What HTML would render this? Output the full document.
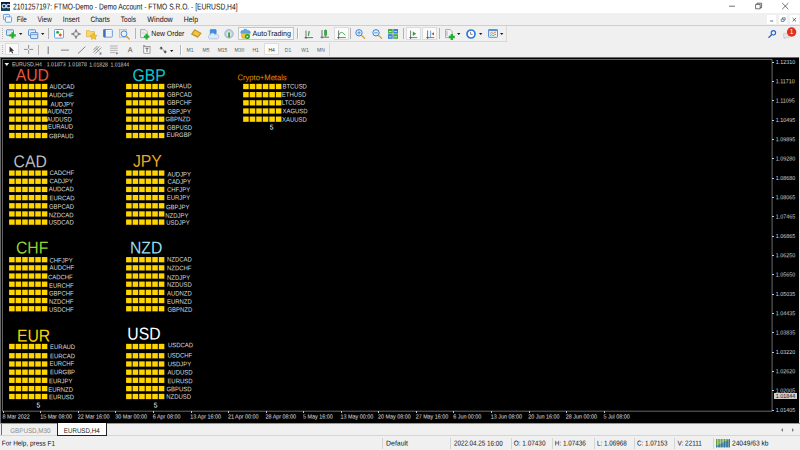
<!DOCTYPE html>
<html lang="en"><head>
<meta charset="utf-8">
<title>2101257197: FTMO-Demo - Demo Account - FTMO S.R.O. - [EURUSD,H4]</title>
<style>
html,body{margin:0;padding:0;}
body{width:800px;height:450px;overflow:hidden;position:relative;background:#f0f0f0;font-family:"Liberation Sans",sans-serif;color:#000;}
.abs{position:absolute;}
.t{position:absolute;white-space:nowrap;}
#titlebar{position:absolute;left:0;top:0;width:800px;height:13px;background:#fff;}
#menubar{position:absolute;left:0;top:13px;width:800px;height:12px;background:#f0f0f0;}
#tb1{position:absolute;left:0;top:25px;width:800px;height:17px;background:#f0f0f0;}
#tb2{position:absolute;left:0;top:42px;width:800px;height:15px;background:#f0f0f0;}
#chart{position:absolute;left:0;top:57px;width:800px;height:366.4px;background:#000;}
#chartinner{position:absolute;left:0;top:0;width:800px;height:450px;}
.row{position:absolute;height:5px;width:40px;}
.row i{position:absolute;top:0;width:5px;height:5px;background:#ffd400;}
.row i:nth-child(1){left:0}
.row i:nth-child(2){left:6.35px}
.row i:nth-child(3){left:12.7px}
.row i:nth-child(4){left:19.05px}
.row i:nth-child(5){left:25.4px}
.row i:nth-child(6){left:31.75px}
.m{position:absolute;top:15px;font-size:7px;line-height:9px;color:#111;white-space:nowrap;}
.tf{position:absolute;top:46.8px;font-size:5px;line-height:7px;color:#5a5a5a;white-space:nowrap;transform:translateX(-50%);}
.sep{position:absolute;width:1px;background:#b4b4b4;}
.dd{position:absolute;width:0;height:0;border-left:1.8px solid transparent;border-right:1.8px solid transparent;border-top:2.1px solid #222;}
.pressed{position:absolute;background:#fbfbfb;border:0.5px solid #dcdcdc;box-sizing:border-box;}
.px{position:absolute;font-size:5.35px;line-height:6px;color:#d8d8d8;left:775.8px;white-space:nowrap;}
.tick{position:absolute;left:772.3px;width:1.3px;height:0.6px;background:#c8c8c8;}
.tx{position:absolute;top:413.5px;font-size:5.4px;line-height:6px;color:#e2e2e2;white-space:nowrap;}
.ttick{position:absolute;top:411px;width:1px;height:2px;background:#c8c8c8;}
.sb{position:absolute;top:439.6px;font-size:6.4px;line-height:8px;color:#111;white-space:nowrap;}
.sbsep{position:absolute;top:438px;width:1px;height:11px;background:#d4d4d4;}
svg{position:absolute;overflow:visible;}
</style>
</head>
<body>
<!-- title bar -->
<div id="titlebar">
  <div class="abs" style="left:0.9px;top:1.9px;width:9.3px;height:9px;background:linear-gradient(#08162c 0%,#0e2440 55%,#1d4f6e 100%);"></div>
  <div class="t" style="left: 0px; top: 0px; font-size: 6.4px; line-height: 6px; color: rgb(255, 255, 255); font-weight: bold; letter-spacing: -0.7px; transform-origin: 0px 5px; transform: translate(1.5px, 3.3px) rotate(0.05deg);">OC</div>
  <div class="t" id="ttl" style="left: 0px; top: 0px; font-size: 7.4px; line-height: 9px; color: rgb(17, 17, 17); transform-origin: 0px 7px; transform: translate(13.1px, 2.39px) scale(0.9046, 1.15) rotate(0.05deg);">2101257197: FTMO-Demo - Demo Account - FTMO S.R.O. - [EURUSD,H4]</div>
  <svg style="left:726px;top:0" width="74" height="13" viewBox="0 0 74 13">
    <path d="M3 6.2h6" stroke="#333" stroke-width="0.7" fill="none"></path>
    <path d="M29.6 4.4h4.6v4.4h-4.6z M31 4.4v-1.2h4.6v4.4h-1.4" stroke="#333" stroke-width="0.7" fill="none"></path>
    <path d="M56.2 3l6.2 6.2 M62.4 3l-6.2 6.2" stroke="#333" stroke-width="0.7" fill="none"></path>
  </svg>
</div>
<!-- menu bar -->
<div id="menubar"></div>
<svg style="left:2.6px;top:14.4px" width="9.4" height="9.4" viewBox="0 0 10 10">
  <rect x="0.5" y="0.5" width="6.5" height="5.5" rx="0.8" fill="#e8f1fb" stroke="#5b8fd0" stroke-width="0.9"></rect>
  <rect x="2.6" y="3" width="6.5" height="5.8" rx="0.8" fill="#f4f8fd" stroke="#5b8fd0" stroke-width="0.9"></rect>
</svg>
<div class="m" id="m0" style="left: 0px; top: 0px; transform-origin: 0px 7px; transform: translate(16.65px, 15px) scale(0.9042, 1.12) rotate(0.05deg);">File</div>
<div class="m" id="m1" style="left: 0px; top: 0px; transform-origin: 0px 7px; transform: translate(37.5px, 15px) scale(0.947, 1.12) rotate(0.05deg);">View</div>
<div class="m" id="m2" style="left: 0px; top: 0px; transform-origin: 0px 7px; transform: translate(62.8px, 15px) scale(0.9649, 1.12) rotate(0.05deg);">Insert</div>
<div class="m" id="m3" style="left: 0px; top: 0px; transform-origin: 0px 7px; transform: translate(90.4px, 15px) scale(0.9455, 1.12) rotate(0.05deg);">Charts</div>
<div class="m" id="m4" style="left: 0px; top: 0px; transform-origin: 0px 7px; transform: translate(120.8px, 15px) scale(0.9239, 1.12) rotate(0.05deg);">Tools</div>
<div class="m" id="m5" style="left: 0px; top: 0px; transform-origin: 0px 7px; transform: translate(147.3px, 15px) scale(1.0238, 1.12) rotate(0.05deg);">Window</div>
<div class="m" id="m6" style="left: 0px; top: 0px; transform-origin: 0px 7px; transform: translate(183.8px, 15px) scale(0.9857, 1.12) rotate(0.05deg);">Help</div>
<!-- MDI controls -->
<div class="abs" style="left:767.3px;top:15px;width:8.7px;height:9px;background:#fff;"></div>
<div class="abs" style="left:778.7px;top:15px;width:8.7px;height:9px;background:#fff;"></div>
<div class="abs" style="left:790px;top:15px;width:8.7px;height:9px;background:#fff;"></div>
<svg style="left:767px;top:15px" width="33" height="9" viewBox="0 0 33 9">
  <path d="M3.2 6h3" stroke="#3b5c8c" stroke-width="0.9" fill="none"></path>
  <path d="M14.2 4.2h2.8v2.2h-2.8z M15.4 4v-1.2h2.8v2.2h-1" stroke="#3b5c8c" stroke-width="0.7" fill="none"></path>
  <path d="M25.6 3l3.4 3.4 M29 3l-3.4 3.4" stroke="#3b5c8c" stroke-width="0.9" fill="none"></path>
</svg>
<div class="abs" style="left:0;top:24.6px;width:800px;height:0.8px;background:#cfcfcf;"></div>
<!-- toolbar 1 -->
<div class="abs" style="left:0;top:41px;width:507px;height:0.8px;background:#d9d9d9;"></div>
<div class="abs" style="left:506.3px;top:26px;width:0.8px;height:15.5px;background:#d9d9d9;"></div>
<div class="abs" style="left:2px;top:28px;width:1px;height:11px;background:repeating-linear-gradient(#b4b4b4 0 1px,#f0f0f0 1px 2px);"></div>
<!-- new chart -->
<svg style="left:6px;top:28.5px" width="11" height="11" viewBox="0 0 11 11">
  <rect x="0.5" y="0.8" width="7" height="5.6" rx="0.6" fill="#dbe9f8" stroke="#4f86c6" stroke-width="0.9"></rect>
  <path d="M6.6 3.2v6.4M3.4 6.4h6.4" stroke="#1fb02c" stroke-width="2.3" fill="none"></path>
</svg>
<svg style="left:19.4px;top:33.3px" width="4" height="3" viewBox="0 0 4 3"><path d="M0 0h3.4l-1.7 2z" fill="#1e1e1e"></path></svg>
<!-- profiles -->
<svg style="left:28px;top:28.5px" width="11" height="11" viewBox="0 0 11 11">
  <rect x="0.5" y="0.8" width="7" height="5.8" rx="0.6" fill="#e6effa" stroke="#4f86c6" stroke-width="0.9"></rect>
  <rect x="2.6" y="3.6" width="7.2" height="6" rx="0.6" fill="#dbe7f6" stroke="#4f86c6" stroke-width="0.9"></rect>
  <path d="M3.2 5.6h6" stroke="#4f86c6" stroke-width="0.7"></path>
</svg>
<svg style="left:41.2px;top:33.3px" width="4" height="3" viewBox="0 0 4 3"><path d="M0 0h3.4l-1.7 2z" fill="#1e1e1e"></path></svg>
<div class="sep" style="left:48.3px;top:28px;height:11px"></div>
<!-- market watch -->
<svg style="left:54px;top:29px" width="10" height="10" viewBox="0 0 10 10">
  <rect x="0.5" y="0.5" width="9" height="8.6" rx="0.8" fill="#fff" stroke="#66a4e4" stroke-width="1"></rect>
  <circle cx="3.6" cy="3.3" r="1.5" fill="#2fae3a"></circle>
  <path d="M6.3 4.2l1.8 1.8-1.8 1.8-1.8-1.8z" fill="#e8552a"></path>
</svg>
<!-- data window -->
<svg style="left:70.5px;top:29px" width="10" height="10" viewBox="0 0 10 10">
  <path d="M5 1.6l3.4 3.4-3.4 3.4-3.4-3.4z" fill="none" stroke="#555" stroke-width="0.7"></path>
  <path d="M5 0.2v3.4M5 6.4v3.4M0.2 5h3.4M6.4 5h3.4" stroke="#444" stroke-width="0.8"></path>
</svg>
<!-- navigator -->
<svg style="left:86px;top:28.5px" width="12" height="11" viewBox="0 0 12 11">
  <path d="M0.5 1.6h3l0.8 1h4.2v5.2h-8z" fill="#f7d96a" stroke="#d4a72c" stroke-width="0.6"></path>
  <path d="M7.6 4l1.1 2.2 2.4 0.3-1.8 1.6 0.5 2.3-2.2-1.2-2.2 1.2 0.5-2.3-1.8-1.6 2.4-0.3z" fill="#f4c430" stroke="#c9971a" stroke-width="0.5"></path>
</svg>
<!-- terminal -->
<svg style="left:103px;top:29.4px" width="10" height="9" viewBox="0 0 10 9">
  <rect x="0.5" y="0.5" width="8.8" height="7.6" rx="0.7" fill="#fdfdff" stroke="#5590dc" stroke-width="0.9"></rect>
  <rect x="0.5" y="0.5" width="2.2" height="7.6" fill="#3a70c0"></rect>
  <path d="M3.6 2.6h4.6M3.6 4.3h4.6M3.6 6h4.6" stroke="#c5d6ee" stroke-width="0.5"></path>
</svg>
<!-- strategy tester -->
<svg style="left:119.4px;top:28.8px" width="11" height="11" viewBox="0 0 11 11">
  <rect x="0.6" y="0.6" width="7" height="7.6" fill="#e9e9e9" stroke="#a9a9a9" stroke-width="0.6"></rect>
  <circle cx="5" cy="4.8" r="2.9" fill="#eaf3fd" stroke="#4f8fd8" stroke-width="1"></circle>
  <path d="M7.2 7l3 3" stroke="#d89a2c" stroke-width="1.3" stroke-linecap="round"></path>
</svg>
<div class="sep" style="left:134.5px;top:28px;height:11px"></div>
<!-- new order -->
<svg style="left:140px;top:28.8px" width="10" height="11" viewBox="0 0 10 11">
  <path d="M0.6 0.6h4.6l2 2v6h-6.6z" fill="#f4f4f4" stroke="#8c8c8c" stroke-width="0.7"></path>
  <path d="M1.8 3.2h3M1.8 4.8h3.6" stroke="#b5b5b5" stroke-width="0.5"></path>
  <path d="M6.6 4.8v5.6M3.8 7.6h5.6" stroke="#1fb02c" stroke-width="2.2" fill="none"></path>
</svg>
<div class="t" id="no" style="left: 0px; top: 0px; font-size: 6.9px; line-height: 7px; color: rgb(17, 17, 17); transform-origin: 0px 6px; transform: translate(151.2px, 30.09px) scale(0.9962, 1.1) rotate(0.05deg);">New Order</div>
<!-- metaeditor -->
<svg style="left:191px;top:29.4px" width="11" height="9" viewBox="0 0 11 9">
  <path d="M3.6 0.6l6.6 3.6-3.4 4.2-6.4-3.2z" fill="#d9a21c" stroke="#a9780c" stroke-width="0.6"></path>
  <path d="M4 1.8l4.8 2.6-2.2 2.6-4.6-2.3z" fill="#f0c846"></path>
</svg>
<!-- person / cloud -->
<svg style="left:207.5px;top:28.8px" width="11" height="11" viewBox="0 0 11 11">
  <rect x="2.2" y="0.5" width="6" height="5.8" rx="0.8" fill="#3c8fe6" stroke="#2b72c4" stroke-width="0.5"></rect>
  <path d="M1.6 9.8a2 2 0 0 1 0.4-3.8 2.6 2.6 0 0 1 4.8-0.6 2.2 2.2 0 0 1 2.8 4.4z" fill="#dfeaf6" stroke="#8fb0d8" stroke-width="0.6"></path>
</svg>
<!-- signals -->
<svg style="left:223.8px;top:29.2px" width="10" height="10" viewBox="0 0 10 10">
  <circle cx="5" cy="4.8" r="4.4" fill="#b9c9dd" stroke="#8aa3c2" stroke-width="0.5"></circle>
  <circle cx="5" cy="4.8" r="2.6" fill="#dfe8f2"></circle>
  <rect x="4.2" y="3.4" width="1.8" height="5" fill="#2ea63a"></rect>
</svg>
<!-- autotrading -->
<div class="abs" style="left:238px;top:27px;width:56px;height:12.6px;background:#f7f7f7;border:0.7px solid #c6c6c6;box-sizing:border-box;"></div>
<svg style="left:240px;top:28.8px" width="11" height="11" viewBox="0 0 11 11">
  <path d="M1 4.2l1.2 5h6.6l1.2-5z" fill="#f0c53a" stroke="#c3961c" stroke-width="0.5"></path>
  <path d="M0.8 3.8a2 2 0 0 1 2.2-2.2 2.6 2.6 0 0 1 4.6 0 2 2 0 0 1 2.6 2.4z" fill="#5ea7e6" stroke="#3b80c6" stroke-width="0.5"></path>
  <circle cx="7.4" cy="7.6" r="2.5" fill="#25a52e"></circle>
  <path d="M6.6 6.4l2 1.2-2 1.2z" fill="#fff"></path>
</svg>
<div class="t" id="at" style="left: 0px; top: 0px; font-size: 6.9px; line-height: 7px; color: rgb(17, 17, 17); transform-origin: 0px 6px; transform: translate(252.5px, 30.09px) scale(1.0323, 1.1) rotate(0.05deg);">AutoTrading</div>
<div class="sep" style="left:297px;top:28px;height:11px"></div>
<div class="sep" style="left:298.2px;top:28px;height:11px;background:#fff"></div>
<!-- bar chart -->
<svg style="left:303.5px;top:29.5px" width="10" height="10" viewBox="0 0 10 10">
  <path d="M2 0.5v8.5M0.5 7.6h8.5" stroke="#222" stroke-width="0.6" fill="none"></path>
  <path d="M5.2 1.2l-0.8 4.6" stroke="#2da03a" stroke-width="1.2"></path>
</svg>
<!-- candles -->
<svg style="left:320.3px;top:29px" width="10" height="10" viewBox="0 0 10 10">
  <path d="M2 1v8.5M0.5 8.2h8.5" stroke="#222" stroke-width="0.6" fill="none"></path>
  <path d="M5.6 0.3v8" stroke="#2b7a33" stroke-width="0.6"></path>
  <rect x="4.4" y="1.6" width="2.4" height="4.6" fill="#2fb23c" stroke="#1f8a2c" stroke-width="0.4"></rect>
</svg>
<!-- line chart pressed -->
<div class="pressed" style="left:333.5px;top:27px;width:15.3px;height:12.6px;"></div>
<svg style="left:336.6px;top:29.5px" width="10" height="10" viewBox="0 0 10 10">
  <path d="M1.6 0.5v8.5M0.3 7.6h8.5" stroke="#222" stroke-width="0.6" fill="none"></path>
  <path d="M1.8 5.2c1.6-3.6 3.6-3.8 6.2 0" stroke="#2da03a" stroke-width="0.9" fill="none"></path>
</svg>
<div class="sep" style="left:350.2px;top:28px;height:11px"></div>
<!-- zoom in -->
<svg style="left:355px;top:29.2px" width="11" height="10" viewBox="0 0 11 10">
  <circle cx="4" cy="3.8" r="3.2" fill="#dcecfb" stroke="#3d85d6" stroke-width="1"></circle>
  <path d="M2.4 3.8h3.2M4 2.2v3.2" stroke="#3d85d6" stroke-width="0.8"></path>
  <path d="M6.6 6.4l3 2.8" stroke="#d9a432" stroke-width="1.4" stroke-linecap="round"></path>
</svg>
<!-- zoom out -->
<svg style="left:371.6px;top:29.2px" width="11" height="10" viewBox="0 0 11 10">
  <circle cx="4" cy="3.8" r="3.2" fill="#dcecfb" stroke="#3d85d6" stroke-width="1"></circle>
  <path d="M2.4 3.8h3.2" stroke="#3d85d6" stroke-width="0.8"></path>
  <path d="M6.6 6.4l3 2.8" stroke="#d9a432" stroke-width="1.4" stroke-linecap="round"></path>
</svg>
<!-- tile -->
<svg style="left:388px;top:29px" width="10" height="10" viewBox="0 0 10 10">
  <rect x="0" y="0" width="4.7" height="4.6" fill="#3fae3f"></rect>
  <rect x="5.3" y="0" width="4.7" height="4.6" fill="#3a7fd6"></rect>
  <rect x="0" y="5.2" width="4.7" height="4.6" fill="#3a7fd6"></rect>
  <rect x="5.3" y="5.2" width="4.7" height="4.6" fill="#3fae3f"></rect>
  <path d="M1 2.6h2.6M6.3 2.6h2.6M1 7.8h2.6M6.3 7.8h2.6" stroke="#e9f2fb" stroke-width="0.9"></path>
</svg>
<div class="sep" style="left:402.8px;top:28px;height:11px"></div>
<!-- autoscroll pressed -->
<div class="pressed" style="left:406px;top:27px;width:14.6px;height:12.6px;"></div>
<svg style="left:409.4px;top:29.5px" width="10" height="10" viewBox="0 0 10 10">
  <path d="M1.6 0.5v8.5M0.3 7.6h8" stroke="#222" stroke-width="0.6" fill="none"></path>
  <path d="M3.8 1.6l3.4 2.2-3.4 2.2z" fill="#2da03a"></path>
</svg>
<!-- chart shift pressed -->
<div class="pressed" style="left:422px;top:27px;width:15px;height:12.6px;"></div>
<svg style="left:425.6px;top:29.5px" width="10" height="10" viewBox="0 0 10 10">
  <path d="M1.6 0.5v8.5M0.3 7.6h8" stroke="#222" stroke-width="0.6" fill="none"></path>
  <path d="M4.6 0.6v6.4" stroke="#3d85d6" stroke-width="0.7"></path>
  <path d="M8 2.2l-2.6 1.6 2.6 1.6z" fill="#d9482a"></path>
</svg>
<div class="sep" style="left:439.4px;top:28px;height:11px"></div>
<!-- indicators -->
<svg style="left:445px;top:28.8px" width="11" height="12" viewBox="0 0 11 12">
  <path d="M0.6 0.6h4.6l2 2v6h-6.6z" fill="#f4f4f4" stroke="#8c8c8c" stroke-width="0.7"></path>
  <path d="M2 2v5" stroke="#777" stroke-width="0.5"></path>
  <path d="M6.8 5v6M3.8 8h6" stroke="#1fb02c" stroke-width="2.3" fill="none"></path>
</svg>
<svg style="left:457.2px;top:33.3px" width="4" height="3" viewBox="0 0 4 3"><path d="M0 0h3.4l-1.7 2z" fill="#1e1e1e"></path></svg>
<!-- clock -->
<svg style="left:466px;top:28.7px" width="10" height="10" viewBox="0 0 10 10">
  <circle cx="5" cy="5" r="4" fill="#fff" stroke="#2f7ad6" stroke-width="1.7"></circle>
  <path d="M4.6 2.8v2.6h2" stroke="#555" stroke-width="0.7" fill="none"></path>
</svg>
<svg style="left:478.6px;top:33.3px" width="4" height="3" viewBox="0 0 4 3"><path d="M0 0h3.4l-1.7 2z" fill="#1e1e1e"></path></svg>
<!-- templates -->
<svg style="left:487.7px;top:29.4px" width="10" height="9" viewBox="0 0 10 9">
  <rect x="0.5" y="0.5" width="9" height="7.8" rx="0.6" fill="#eef4fb" stroke="#5a94d8" stroke-width="1"></rect>
  <rect x="0.5" y="0.5" width="9" height="1.6" fill="#5a94d8"></rect>
  <path d="M1.6 4.6l2-1 1.6 0.8 2.8-1.4" stroke="#e0663a" stroke-width="0.8" fill="none"></path>
  <path d="M1.6 6.8l2-1 1.6 0.8 2.8-1.4" stroke="#3fae3f" stroke-width="0.8" fill="none"></path>
</svg>
<svg style="left:500.2px;top:33.3px" width="4" height="3" viewBox="0 0 4 3"><path d="M0 0h3.4l-1.7 2z" fill="#1e1e1e"></path></svg>
<!-- search + notification -->
<svg style="left:768px;top:30px" width="9" height="8" viewBox="0 0 9 8">
  <circle cx="5.4" cy="2.8" r="2.2" fill="#e8f0fc" stroke="#2f62c8" stroke-width="1.1"></circle>
  <path d="M3.8 4.6l-3 2.8" stroke="#2f62c8" stroke-width="1.3" stroke-linecap="round"></path>
</svg>
<svg style="left:783px;top:27px" width="14" height="13" viewBox="0 0 14 13">
  <path d="M0.6 6.4h5.6v4h-3l-1.6 1.6v-1.6h-1z" fill="#e4e4e4" stroke="#bdbdbd" stroke-width="0.5"></path>
  <circle cx="8.6" cy="5" r="4.7" fill="#e0301e"></circle>
  <text x="8.6" y="7.4" font-size="6.6" font-family="Liberation Sans, sans-serif" fill="#fff" text-anchor="middle">1</text>
</svg>
<!-- toolbar 2 -->
<div class="abs" style="left:2px;top:45px;width:1px;height:10px;background:repeating-linear-gradient(#b4b4b4 0 1px,#f0f0f0 1px 2px);"></div>
<div class="abs" style="left:329.4px;top:43px;width:0.8px;height:13px;background:#d9d9d9;"></div>
<div class="pressed" style="left:5px;top:43.2px;width:14px;height:12px;"></div>
<svg style="left:8.6px;top:46px" width="6" height="8" viewBox="0 0 6 8">
  <path d="M0.6 0.4v6.2l1.5-1.4 1.1 2.4 1-0.5-1.1-2.3h2z" fill="#333"></path>
</svg>
<svg style="left:24px;top:45.4px" width="10" height="9" viewBox="0 0 10 9">
  <path d="M4.6 0v3.6M4.6 5.2v3.6M0 4.4h3.8M5.4 4.4h3.8" stroke="#666" stroke-width="0.7"></path>
</svg>
<div class="sep" style="left:38px;top:45px;height:10px"></div>
<svg style="left:44px;top:45px" width="30" height="10" viewBox="0 0 30 10"><path d="M4.2 1.5v7.5" stroke="#555" stroke-width="0.8"></path><path d="M17 5.1h8" stroke="#666" stroke-width="0.8"></path></svg>

<svg style="left:77px;top:46px" width="10" height="9" viewBox="0 0 10 9">
  <path d="M1 7.6l7.4-7" stroke="#555" stroke-width="0.7"></path>
</svg>
<svg style="left:93px;top:45.4px" width="10" height="10" viewBox="0 0 10 10">
  <path d="M0.4 7.4l6-6M2.2 8.6l6-6M0.4 5l4-4" stroke="#555" stroke-width="0.6"></path>
  <path d="M3 3.4l3 3" stroke="#555" stroke-width="0.5"></path>
  <text x="6.4" y="9.6" font-size="3.4" font-family="Liberation Sans, sans-serif" fill="#333">E</text>
</svg>
<svg style="left:110px;top:45px" width="10" height="10" viewBox="0 0 10 10">
  <path d="M0 1h7.6M0 3.2h7.6M0 5.4h7.6M0 7.6h5.4" stroke="#8a8a8a" stroke-width="0.6"></path>
  <text x="6" y="9.6" font-size="3.4" font-family="Liberation Sans, sans-serif" fill="#333">F</text>
</svg>
<div class="t" style="left: 0px; top: 0px; font-size: 7.2px; line-height: 8px; color: rgb(85, 85, 85); transform-origin: 0px 6px; transform: translate(127.8px, 46.3px) rotate(0.05deg);">A</div>
<svg style="left:143px;top:45.2px" width="8" height="9" viewBox="0 0 8 9">
  <rect x="0.8" y="1.6" width="6.2" height="6.6" fill="#fbfbfb" stroke="#666" stroke-width="0.6"></rect>
  <path d="M0 0.6h2.2" stroke="#666" stroke-width="0.6"></path>
  <path d="M2.4 3.2h3.2M4 3.2v3.8" stroke="#444" stroke-width="0.8"></path>
</svg>
<svg style="left:159px;top:46px" width="9" height="8" viewBox="0 0 9 8">
  <path d="M2.2 0.4l1.8 2h-1.2v1h-1.2v-1h-1.2z" fill="#444"></path>
  <path d="M6.2 7.6l-1.8-2h1.2v-1h1.2v1h1.2z" fill="#444"></path>
  <path d="M3.6 3.4l2 1.6" stroke="#444" stroke-width="0.6"></path>
</svg>
<svg style="left:170.2px;top:49.6px" width="4" height="3" viewBox="0 0 4 3"><path d="M0 0h3.4l-1.7 2z" fill="#1e1e1e"></path></svg>
<div class="sep" style="left:179.8px;top:45px;height:10px"></div>
<div class="sep" style="left:181px;top:45px;height:10px;background:#fff"></div>
<div class="pressed" style="left:264.4px;top:43.2px;width:15px;height:12px;"></div>
<div class="tf" style="left: 0px; top: 0px; transform-origin: 0px 5px; transform: translate(186.52px, 46.8px) scale(1, 1.1) rotate(0.05deg);">M1</div>
<div class="tf" style="left: 0px; top: 0px; transform-origin: 0px 5px; transform: translate(202.52px, 46.8px) scale(1, 1.1) rotate(0.05deg);">M5</div>
<div class="tf" style="left: 0px; top: 0px; transform-origin: 0px 5px; transform: translate(217.63px, 46.8px) scale(1, 1.1) rotate(0.05deg);">M15</div>
<div class="tf" style="left: 0px; top: 0px; transform-origin: 0px 5px; transform: translate(234.52px, 46.8px) scale(1, 1.1) rotate(0.05deg);">M30</div>
<div class="tf" style="left: 0px; top: 0px; transform-origin: 0px 5px; transform: translate(252.39px, 46.8px) scale(1, 1.1) rotate(0.05deg);">H1</div>
<div class="tf" style="left: 0px; color: rgb(51, 51, 51); top: 0px; transform-origin: 0px 5px; transform: translate(268.39px, 46.8px) scale(1, 1.1) rotate(0.05deg);">H4</div>
<div class="tf" style="left: 0px; top: 0px; transform-origin: 0px 5px; transform: translate(284.8px, 46.8px) scale(1, 1.1) rotate(0.05deg);">D1</div>
<div class="tf" style="left: 0px; top: 0px; transform-origin: 0px 5px; transform: translate(301.25px, 46.8px) scale(1, 1.1) rotate(0.05deg);">W1</div>
<div class="tf" style="left: 0px; top: 0px; transform-origin: 0px 5px; transform: translate(317.11px, 46.8px) scale(1, 1.1) rotate(0.05deg);">MN</div>

<!-- chart -->
<div id="chart"></div>
<div id="chartinner">
<div class="abs" style="left:0;top:56.8px;width:800px;height:1px;background:#6a6a6a;"></div>
<div class="abs" style="left:0;top:57.5px;width:1px;height:366px;background:#6a6a6a;"></div>
<div class="abs" style="left:798.8px;top:57.3px;width:1.2px;height:366.3px;background:#e6e6e6;"></div>
<svg style="left:0;top:0" width="800" height="450" viewBox="0 0 800 450"><path d="M2.45 59.45H772.1V411.2H2.45Z" fill="none" stroke="#d0d0d0" stroke-width="0.5"></path><path d="M4.5 62.9h4.6l-2.3 3z" fill="#ececec"></path></svg>
<div class="t" id="info" style="left: 0px; top: 0px; font-size: 5.3px; line-height: 6px; color: rgb(214, 214, 214); word-spacing: 1px; transform-origin: 0px 5px; transform: translate(11.9px, 61.3px) scale(0.9811, 1.1) rotate(0.05deg);">EURUSD,H4&nbsp; 1.01873 1.01878 1.01828 1.01844</div>
<div class="tick" style="top:61.70px"></div>
<div class="px" style="top: 0px; left: 0px; transform-origin: 0px 5px; transform: translate(775.8px, 58.89px) scale(1, 1.1) rotate(0.05deg);">1.12310</div>
<div class="tick" style="top:81.03px"></div>
<div class="px" style="top: 0px; left: 0px; transform-origin: 0px 5px; transform: translate(775.8px, 78.22px) scale(1, 1.1) rotate(0.05deg);">1.11710</div>
<div class="tick" style="top:100.37px"></div>
<div class="px" style="top: 0px; left: 0px; transform-origin: 0px 5px; transform: translate(775.8px, 97.56px) scale(1, 1.1) rotate(0.05deg);">1.11095</div>
<div class="tick" style="top:119.70px"></div>
<div class="px" style="top: 0px; left: 0px; transform-origin: 0px 5px; transform: translate(775.8px, 116.89px) scale(1, 1.1) rotate(0.05deg);">1.10495</div>
<div class="tick" style="top:139.03px"></div>
<div class="px" style="top: 0px; left: 0px; transform-origin: 0px 5px; transform: translate(775.8px, 136.22px) scale(1, 1.1) rotate(0.05deg);">1.09895</div>
<div class="tick" style="top:158.37px"></div>
<div class="px" style="top: 0px; left: 0px; transform-origin: 0px 5px; transform: translate(775.8px, 155.56px) scale(1, 1.1) rotate(0.05deg);">1.09280</div>
<div class="tick" style="top:177.70px"></div>
<div class="px" style="top: 0px; left: 0px; transform-origin: 0px 5px; transform: translate(775.8px, 174.89px) scale(1, 1.1) rotate(0.05deg);">1.08680</div>
<div class="tick" style="top:197.03px"></div>
<div class="px" style="top: 0px; left: 0px; transform-origin: 0px 5px; transform: translate(775.8px, 194.22px) scale(1, 1.1) rotate(0.05deg);">1.08065</div>
<div class="tick" style="top:216.37px"></div>
<div class="px" style="top: 0px; left: 0px; transform-origin: 0px 5px; transform: translate(775.8px, 213.56px) scale(1, 1.1) rotate(0.05deg);">1.07465</div>
<div class="tick" style="top:235.70px"></div>
<div class="px" style="top: 0px; left: 0px; transform-origin: 0px 5px; transform: translate(775.8px, 232.89px) scale(1, 1.1) rotate(0.05deg);">1.06865</div>
<div class="tick" style="top:255.03px"></div>
<div class="px" style="top: 0px; left: 0px; transform-origin: 0px 5px; transform: translate(775.8px, 252.22px) scale(1, 1.1) rotate(0.05deg);">1.06250</div>
<div class="tick" style="top:274.37px"></div>
<div class="px" style="top: 0px; left: 0px; transform-origin: 0px 5px; transform: translate(775.8px, 271.56px) scale(1, 1.1) rotate(0.05deg);">1.05650</div>
<div class="tick" style="top:293.70px"></div>
<div class="px" style="top: 0px; left: 0px; transform-origin: 0px 5px; transform: translate(775.8px, 290.89px) scale(1, 1.1) rotate(0.05deg);">1.05035</div>
<div class="tick" style="top:313.03px"></div>
<div class="px" style="top: 0px; left: 0px; transform-origin: 0px 5px; transform: translate(775.8px, 310.22px) scale(1, 1.1) rotate(0.05deg);">1.04435</div>
<div class="tick" style="top:332.37px"></div>
<div class="px" style="top: 0px; left: 0px; transform-origin: 0px 5px; transform: translate(775.8px, 329.56px) scale(1, 1.1) rotate(0.05deg);">1.03835</div>
<div class="tick" style="top:351.70px"></div>
<div class="px" style="top: 0px; left: 0px; transform-origin: 0px 5px; transform: translate(775.8px, 348.89px) scale(1, 1.1) rotate(0.05deg);">1.03220</div>
<div class="tick" style="top:371.03px"></div>
<div class="px" style="top: 0px; left: 0px; transform-origin: 0px 5px; transform: translate(775.8px, 368.22px) scale(1, 1.1) rotate(0.05deg);">1.02620</div>
<div class="tick" style="top:390.37px"></div>
<div class="px" style="top: 0px; left: 0px; transform-origin: 0px 5px; transform: translate(775.8px, 387.56px) scale(1, 1.1) rotate(0.05deg);">1.02005</div>
<div class="tick" style="top:409.70px"></div>
<div class="px" style="top: 0px; left: 0px; transform-origin: 0px 5px; transform: translate(775.8px, 406.89px) scale(1, 1.1) rotate(0.05deg);">1.01405</div>
<div class="abs" style="left:773.7px;top:393.2px;width:23px;height:5.5px;background:#cfcfcf;"></div>
<div class="px" style="top: 0px; color: rgb(17, 17, 17); left: 0px; transform-origin: 0px 5px; transform: translate(775.8px, 392.89px) scale(1, 1.1) rotate(0.05deg);">1.01844</div>
<div class="ttick" style="left:2.80px"></div>
<div class="tx" style="left: 0px; top: 0px; transform-origin: 0px 5px; transform: translate(2.59px, 413.5px) scale(1, 1.1) rotate(0.05deg);">8 Mar 2022</div>
<div class="ttick" style="left:40.35px"></div>
<div class="tx" style="left: 0px; top: 0px; transform-origin: 0px 5px; transform: translate(40.14px, 413.5px) scale(1, 1.1) rotate(0.05deg);">15 Mar 08:00</div>
<div class="ttick" style="left:77.90px"></div>
<div class="tx" style="left: 0px; top: 0px; transform-origin: 0px 5px; transform: translate(77.69px, 413.5px) scale(1, 1.1) rotate(0.05deg);">22 Mar 16:00</div>
<div class="ttick" style="left:115.45px"></div>
<div class="tx" style="left: 0px; top: 0px; transform-origin: 0px 5px; transform: translate(115.25px, 413.5px) scale(1, 1.1) rotate(0.05deg);">30 Mar 00:00</div>
<div class="ttick" style="left:153.00px"></div>
<div class="tx" style="left: 0px; top: 0px; transform-origin: 0px 5px; transform: translate(152.8px, 413.5px) scale(1, 1.1) rotate(0.05deg);">6 Apr 08:00</div>
<div class="ttick" style="left:190.55px"></div>
<div class="tx" style="left: 0px; top: 0px; transform-origin: 0px 5px; transform: translate(190.34px, 413.5px) scale(1, 1.1) rotate(0.05deg);">13 Apr 16:00</div>
<div class="ttick" style="left:228.10px"></div>
<div class="tx" style="left: 0px; top: 0px; transform-origin: 0px 5px; transform: translate(227.89px, 413.5px) scale(1, 1.1) rotate(0.05deg);">21 Apr 00:00</div>
<div class="ttick" style="left:265.65px"></div>
<div class="tx" style="left: 0px; top: 0px; transform-origin: 0px 5px; transform: translate(265.44px, 413.5px) scale(1, 1.1) rotate(0.05deg);">28 Apr 08:00</div>
<div class="ttick" style="left:303.20px"></div>
<div class="tx" style="left: 0px; top: 0px; transform-origin: 0px 5px; transform: translate(303px, 413.5px) scale(1, 1.1) rotate(0.05deg);">5 May 16:00</div>
<div class="ttick" style="left:340.75px"></div>
<div class="tx" style="left: 0px; top: 0px; transform-origin: 0px 5px; transform: translate(340.55px, 413.5px) scale(1, 1.1) rotate(0.05deg);">13 May 00:00</div>
<div class="ttick" style="left:378.30px"></div>
<div class="tx" style="left: 0px; top: 0px; transform-origin: 0px 5px; transform: translate(378.09px, 413.5px) scale(1, 1.1) rotate(0.05deg);">20 May 08:00</div>
<div class="ttick" style="left:415.85px"></div>
<div class="tx" style="left: 0px; top: 0px; transform-origin: 0px 5px; transform: translate(415.64px, 413.5px) scale(1, 1.1) rotate(0.05deg);">27 May 16:00</div>
<div class="ttick" style="left:453.40px"></div>
<div class="tx" style="left: 0px; top: 0px; transform-origin: 0px 5px; transform: translate(453.19px, 413.5px) scale(1, 1.1) rotate(0.05deg);">6 Jun 00:00</div>
<div class="ttick" style="left:490.95px"></div>
<div class="tx" style="left: 0px; top: 0px; transform-origin: 0px 5px; transform: translate(490.75px, 413.5px) scale(1, 1.1) rotate(0.05deg);">13 Jun 08:00</div>
<div class="ttick" style="left:528.50px"></div>
<div class="tx" style="left: 0px; top: 0px; transform-origin: 0px 5px; transform: translate(528.3px, 413.5px) scale(1, 1.1) rotate(0.05deg);">20 Jun 16:00</div>
<div class="ttick" style="left:566.05px"></div>
<div class="tx" style="left: 0px; top: 0px; transform-origin: 0px 5px; transform: translate(565.84px, 413.5px) scale(1, 1.1) rotate(0.05deg);">28 Jun 00:00</div>
<div class="ttick" style="left:603.60px"></div>
<div class="tx" style="left: 0px; top: 0px; transform-origin: 0px 5px; transform: translate(603.39px, 413.5px) scale(1, 1.1) rotate(0.05deg);">5 Jul 08:00</div>
<svg style="left:0;top:0" width="800" height="450" viewBox="0 0 800 450" fill="#ffd500"><rect x="9.10" y="83.85" width="5.55" height="5.3"></rect><rect x="15.64" y="83.85" width="5.55" height="5.3"></rect><rect x="22.18" y="83.85" width="5.55" height="5.3"></rect><rect x="28.72" y="83.85" width="5.55" height="5.3"></rect><rect x="35.26" y="83.85" width="5.55" height="5.3"></rect><rect x="41.80" y="83.85" width="5.55" height="5.3"></rect><rect x="9.10" y="92.02" width="5.55" height="5.3"></rect><rect x="15.64" y="92.02" width="5.55" height="5.3"></rect><rect x="22.18" y="92.02" width="5.55" height="5.3"></rect><rect x="28.72" y="92.02" width="5.55" height="5.3"></rect><rect x="35.26" y="92.02" width="5.55" height="5.3"></rect><rect x="41.80" y="92.02" width="5.55" height="5.3"></rect><rect x="9.10" y="100.19" width="5.55" height="5.3"></rect><rect x="15.64" y="100.19" width="5.55" height="5.3"></rect><rect x="22.18" y="100.19" width="5.55" height="5.3"></rect><rect x="28.72" y="100.19" width="5.55" height="5.3"></rect><rect x="35.26" y="100.19" width="5.55" height="5.3"></rect><rect x="41.80" y="100.19" width="5.55" height="5.3"></rect><rect x="9.10" y="108.36" width="5.55" height="5.3"></rect><rect x="15.64" y="108.36" width="5.55" height="5.3"></rect><rect x="22.18" y="108.36" width="5.55" height="5.3"></rect><rect x="28.72" y="108.36" width="5.55" height="5.3"></rect><rect x="35.26" y="108.36" width="5.55" height="5.3"></rect><rect x="41.80" y="108.36" width="5.55" height="5.3"></rect><rect x="9.10" y="116.53" width="5.55" height="5.3"></rect><rect x="15.64" y="116.53" width="5.55" height="5.3"></rect><rect x="22.18" y="116.53" width="5.55" height="5.3"></rect><rect x="28.72" y="116.53" width="5.55" height="5.3"></rect><rect x="35.26" y="116.53" width="5.55" height="5.3"></rect><rect x="41.80" y="116.53" width="5.55" height="5.3"></rect><rect x="9.10" y="124.70" width="5.55" height="5.3"></rect><rect x="15.64" y="124.70" width="5.55" height="5.3"></rect><rect x="22.18" y="124.70" width="5.55" height="5.3"></rect><rect x="28.72" y="124.70" width="5.55" height="5.3"></rect><rect x="35.26" y="124.70" width="5.55" height="5.3"></rect><rect x="41.80" y="124.70" width="5.55" height="5.3"></rect><rect x="9.10" y="132.87" width="5.55" height="5.3"></rect><rect x="15.64" y="132.87" width="5.55" height="5.3"></rect><rect x="22.18" y="132.87" width="5.55" height="5.3"></rect><rect x="28.72" y="132.87" width="5.55" height="5.3"></rect><rect x="35.26" y="132.87" width="5.55" height="5.3"></rect><rect x="41.80" y="132.87" width="5.55" height="5.3"></rect><rect x="126.10" y="83.85" width="5.55" height="5.3"></rect><rect x="132.64" y="83.85" width="5.55" height="5.3"></rect><rect x="139.18" y="83.85" width="5.55" height="5.3"></rect><rect x="145.72" y="83.85" width="5.55" height="5.3"></rect><rect x="152.26" y="83.85" width="5.55" height="5.3"></rect><rect x="158.80" y="83.85" width="5.55" height="5.3"></rect><rect x="126.10" y="92.02" width="5.55" height="5.3"></rect><rect x="132.64" y="92.02" width="5.55" height="5.3"></rect><rect x="139.18" y="92.02" width="5.55" height="5.3"></rect><rect x="145.72" y="92.02" width="5.55" height="5.3"></rect><rect x="152.26" y="92.02" width="5.55" height="5.3"></rect><rect x="158.80" y="92.02" width="5.55" height="5.3"></rect><rect x="126.10" y="100.19" width="5.55" height="5.3"></rect><rect x="132.64" y="100.19" width="5.55" height="5.3"></rect><rect x="139.18" y="100.19" width="5.55" height="5.3"></rect><rect x="145.72" y="100.19" width="5.55" height="5.3"></rect><rect x="152.26" y="100.19" width="5.55" height="5.3"></rect><rect x="158.80" y="100.19" width="5.55" height="5.3"></rect><rect x="126.10" y="108.36" width="5.55" height="5.3"></rect><rect x="132.64" y="108.36" width="5.55" height="5.3"></rect><rect x="139.18" y="108.36" width="5.55" height="5.3"></rect><rect x="145.72" y="108.36" width="5.55" height="5.3"></rect><rect x="152.26" y="108.36" width="5.55" height="5.3"></rect><rect x="158.80" y="108.36" width="5.55" height="5.3"></rect><rect x="126.10" y="116.53" width="5.55" height="5.3"></rect><rect x="132.64" y="116.53" width="5.55" height="5.3"></rect><rect x="139.18" y="116.53" width="5.55" height="5.3"></rect><rect x="145.72" y="116.53" width="5.55" height="5.3"></rect><rect x="152.26" y="116.53" width="5.55" height="5.3"></rect><rect x="158.80" y="116.53" width="5.55" height="5.3"></rect><rect x="126.10" y="124.70" width="5.55" height="5.3"></rect><rect x="132.64" y="124.70" width="5.55" height="5.3"></rect><rect x="139.18" y="124.70" width="5.55" height="5.3"></rect><rect x="145.72" y="124.70" width="5.55" height="5.3"></rect><rect x="152.26" y="124.70" width="5.55" height="5.3"></rect><rect x="158.80" y="124.70" width="5.55" height="5.3"></rect><rect x="126.10" y="132.87" width="5.55" height="5.3"></rect><rect x="132.64" y="132.87" width="5.55" height="5.3"></rect><rect x="139.18" y="132.87" width="5.55" height="5.3"></rect><rect x="145.72" y="132.87" width="5.55" height="5.3"></rect><rect x="152.26" y="132.87" width="5.55" height="5.3"></rect><rect x="158.80" y="132.87" width="5.55" height="5.3"></rect><rect x="9.10" y="170.45" width="5.55" height="5.3"></rect><rect x="15.64" y="170.45" width="5.55" height="5.3"></rect><rect x="22.18" y="170.45" width="5.55" height="5.3"></rect><rect x="28.72" y="170.45" width="5.55" height="5.3"></rect><rect x="35.26" y="170.45" width="5.55" height="5.3"></rect><rect x="41.80" y="170.45" width="5.55" height="5.3"></rect><rect x="9.10" y="178.62" width="5.55" height="5.3"></rect><rect x="15.64" y="178.62" width="5.55" height="5.3"></rect><rect x="22.18" y="178.62" width="5.55" height="5.3"></rect><rect x="28.72" y="178.62" width="5.55" height="5.3"></rect><rect x="35.26" y="178.62" width="5.55" height="5.3"></rect><rect x="41.80" y="178.62" width="5.55" height="5.3"></rect><rect x="9.10" y="186.79" width="5.55" height="5.3"></rect><rect x="15.64" y="186.79" width="5.55" height="5.3"></rect><rect x="22.18" y="186.79" width="5.55" height="5.3"></rect><rect x="28.72" y="186.79" width="5.55" height="5.3"></rect><rect x="35.26" y="186.79" width="5.55" height="5.3"></rect><rect x="41.80" y="186.79" width="5.55" height="5.3"></rect><rect x="9.10" y="194.96" width="5.55" height="5.3"></rect><rect x="15.64" y="194.96" width="5.55" height="5.3"></rect><rect x="22.18" y="194.96" width="5.55" height="5.3"></rect><rect x="28.72" y="194.96" width="5.55" height="5.3"></rect><rect x="35.26" y="194.96" width="5.55" height="5.3"></rect><rect x="41.80" y="194.96" width="5.55" height="5.3"></rect><rect x="9.10" y="203.13" width="5.55" height="5.3"></rect><rect x="15.64" y="203.13" width="5.55" height="5.3"></rect><rect x="22.18" y="203.13" width="5.55" height="5.3"></rect><rect x="28.72" y="203.13" width="5.55" height="5.3"></rect><rect x="35.26" y="203.13" width="5.55" height="5.3"></rect><rect x="41.80" y="203.13" width="5.55" height="5.3"></rect><rect x="9.10" y="211.30" width="5.55" height="5.3"></rect><rect x="15.64" y="211.30" width="5.55" height="5.3"></rect><rect x="22.18" y="211.30" width="5.55" height="5.3"></rect><rect x="28.72" y="211.30" width="5.55" height="5.3"></rect><rect x="35.26" y="211.30" width="5.55" height="5.3"></rect><rect x="41.80" y="211.30" width="5.55" height="5.3"></rect><rect x="9.10" y="219.47" width="5.55" height="5.3"></rect><rect x="15.64" y="219.47" width="5.55" height="5.3"></rect><rect x="22.18" y="219.47" width="5.55" height="5.3"></rect><rect x="28.72" y="219.47" width="5.55" height="5.3"></rect><rect x="35.26" y="219.47" width="5.55" height="5.3"></rect><rect x="41.80" y="219.47" width="5.55" height="5.3"></rect><rect x="126.10" y="170.45" width="5.55" height="5.3"></rect><rect x="132.64" y="170.45" width="5.55" height="5.3"></rect><rect x="139.18" y="170.45" width="5.55" height="5.3"></rect><rect x="145.72" y="170.45" width="5.55" height="5.3"></rect><rect x="152.26" y="170.45" width="5.55" height="5.3"></rect><rect x="158.80" y="170.45" width="5.55" height="5.3"></rect><rect x="126.10" y="178.62" width="5.55" height="5.3"></rect><rect x="132.64" y="178.62" width="5.55" height="5.3"></rect><rect x="139.18" y="178.62" width="5.55" height="5.3"></rect><rect x="145.72" y="178.62" width="5.55" height="5.3"></rect><rect x="152.26" y="178.62" width="5.55" height="5.3"></rect><rect x="158.80" y="178.62" width="5.55" height="5.3"></rect><rect x="126.10" y="186.79" width="5.55" height="5.3"></rect><rect x="132.64" y="186.79" width="5.55" height="5.3"></rect><rect x="139.18" y="186.79" width="5.55" height="5.3"></rect><rect x="145.72" y="186.79" width="5.55" height="5.3"></rect><rect x="152.26" y="186.79" width="5.55" height="5.3"></rect><rect x="158.80" y="186.79" width="5.55" height="5.3"></rect><rect x="126.10" y="194.96" width="5.55" height="5.3"></rect><rect x="132.64" y="194.96" width="5.55" height="5.3"></rect><rect x="139.18" y="194.96" width="5.55" height="5.3"></rect><rect x="145.72" y="194.96" width="5.55" height="5.3"></rect><rect x="152.26" y="194.96" width="5.55" height="5.3"></rect><rect x="158.80" y="194.96" width="5.55" height="5.3"></rect><rect x="126.10" y="203.13" width="5.55" height="5.3"></rect><rect x="132.64" y="203.13" width="5.55" height="5.3"></rect><rect x="139.18" y="203.13" width="5.55" height="5.3"></rect><rect x="145.72" y="203.13" width="5.55" height="5.3"></rect><rect x="152.26" y="203.13" width="5.55" height="5.3"></rect><rect x="158.80" y="203.13" width="5.55" height="5.3"></rect><rect x="126.10" y="211.30" width="5.55" height="5.3"></rect><rect x="132.64" y="211.30" width="5.55" height="5.3"></rect><rect x="139.18" y="211.30" width="5.55" height="5.3"></rect><rect x="145.72" y="211.30" width="5.55" height="5.3"></rect><rect x="152.26" y="211.30" width="5.55" height="5.3"></rect><rect x="158.80" y="211.30" width="5.55" height="5.3"></rect><rect x="126.10" y="219.47" width="5.55" height="5.3"></rect><rect x="132.64" y="219.47" width="5.55" height="5.3"></rect><rect x="139.18" y="219.47" width="5.55" height="5.3"></rect><rect x="145.72" y="219.47" width="5.55" height="5.3"></rect><rect x="152.26" y="219.47" width="5.55" height="5.3"></rect><rect x="158.80" y="219.47" width="5.55" height="5.3"></rect><rect x="9.10" y="257.05" width="5.55" height="5.3"></rect><rect x="15.64" y="257.05" width="5.55" height="5.3"></rect><rect x="22.18" y="257.05" width="5.55" height="5.3"></rect><rect x="28.72" y="257.05" width="5.55" height="5.3"></rect><rect x="35.26" y="257.05" width="5.55" height="5.3"></rect><rect x="41.80" y="257.05" width="5.55" height="5.3"></rect><rect x="9.10" y="265.22" width="5.55" height="5.3"></rect><rect x="15.64" y="265.22" width="5.55" height="5.3"></rect><rect x="22.18" y="265.22" width="5.55" height="5.3"></rect><rect x="28.72" y="265.22" width="5.55" height="5.3"></rect><rect x="35.26" y="265.22" width="5.55" height="5.3"></rect><rect x="41.80" y="265.22" width="5.55" height="5.3"></rect><rect x="9.10" y="273.39" width="5.55" height="5.3"></rect><rect x="15.64" y="273.39" width="5.55" height="5.3"></rect><rect x="22.18" y="273.39" width="5.55" height="5.3"></rect><rect x="28.72" y="273.39" width="5.55" height="5.3"></rect><rect x="35.26" y="273.39" width="5.55" height="5.3"></rect><rect x="41.80" y="273.39" width="5.55" height="5.3"></rect><rect x="9.10" y="281.56" width="5.55" height="5.3"></rect><rect x="15.64" y="281.56" width="5.55" height="5.3"></rect><rect x="22.18" y="281.56" width="5.55" height="5.3"></rect><rect x="28.72" y="281.56" width="5.55" height="5.3"></rect><rect x="35.26" y="281.56" width="5.55" height="5.3"></rect><rect x="41.80" y="281.56" width="5.55" height="5.3"></rect><rect x="9.10" y="289.73" width="5.55" height="5.3"></rect><rect x="15.64" y="289.73" width="5.55" height="5.3"></rect><rect x="22.18" y="289.73" width="5.55" height="5.3"></rect><rect x="28.72" y="289.73" width="5.55" height="5.3"></rect><rect x="35.26" y="289.73" width="5.55" height="5.3"></rect><rect x="41.80" y="289.73" width="5.55" height="5.3"></rect><rect x="9.10" y="297.90" width="5.55" height="5.3"></rect><rect x="15.64" y="297.90" width="5.55" height="5.3"></rect><rect x="22.18" y="297.90" width="5.55" height="5.3"></rect><rect x="28.72" y="297.90" width="5.55" height="5.3"></rect><rect x="35.26" y="297.90" width="5.55" height="5.3"></rect><rect x="41.80" y="297.90" width="5.55" height="5.3"></rect><rect x="9.10" y="306.07" width="5.55" height="5.3"></rect><rect x="15.64" y="306.07" width="5.55" height="5.3"></rect><rect x="22.18" y="306.07" width="5.55" height="5.3"></rect><rect x="28.72" y="306.07" width="5.55" height="5.3"></rect><rect x="35.26" y="306.07" width="5.55" height="5.3"></rect><rect x="41.80" y="306.07" width="5.55" height="5.3"></rect><rect x="126.10" y="257.05" width="5.55" height="5.3"></rect><rect x="132.64" y="257.05" width="5.55" height="5.3"></rect><rect x="139.18" y="257.05" width="5.55" height="5.3"></rect><rect x="145.72" y="257.05" width="5.55" height="5.3"></rect><rect x="152.26" y="257.05" width="5.55" height="5.3"></rect><rect x="158.80" y="257.05" width="5.55" height="5.3"></rect><rect x="126.10" y="265.22" width="5.55" height="5.3"></rect><rect x="132.64" y="265.22" width="5.55" height="5.3"></rect><rect x="139.18" y="265.22" width="5.55" height="5.3"></rect><rect x="145.72" y="265.22" width="5.55" height="5.3"></rect><rect x="152.26" y="265.22" width="5.55" height="5.3"></rect><rect x="158.80" y="265.22" width="5.55" height="5.3"></rect><rect x="126.10" y="273.39" width="5.55" height="5.3"></rect><rect x="132.64" y="273.39" width="5.55" height="5.3"></rect><rect x="139.18" y="273.39" width="5.55" height="5.3"></rect><rect x="145.72" y="273.39" width="5.55" height="5.3"></rect><rect x="152.26" y="273.39" width="5.55" height="5.3"></rect><rect x="158.80" y="273.39" width="5.55" height="5.3"></rect><rect x="126.10" y="281.56" width="5.55" height="5.3"></rect><rect x="132.64" y="281.56" width="5.55" height="5.3"></rect><rect x="139.18" y="281.56" width="5.55" height="5.3"></rect><rect x="145.72" y="281.56" width="5.55" height="5.3"></rect><rect x="152.26" y="281.56" width="5.55" height="5.3"></rect><rect x="158.80" y="281.56" width="5.55" height="5.3"></rect><rect x="126.10" y="289.73" width="5.55" height="5.3"></rect><rect x="132.64" y="289.73" width="5.55" height="5.3"></rect><rect x="139.18" y="289.73" width="5.55" height="5.3"></rect><rect x="145.72" y="289.73" width="5.55" height="5.3"></rect><rect x="152.26" y="289.73" width="5.55" height="5.3"></rect><rect x="158.80" y="289.73" width="5.55" height="5.3"></rect><rect x="126.10" y="297.90" width="5.55" height="5.3"></rect><rect x="132.64" y="297.90" width="5.55" height="5.3"></rect><rect x="139.18" y="297.90" width="5.55" height="5.3"></rect><rect x="145.72" y="297.90" width="5.55" height="5.3"></rect><rect x="152.26" y="297.90" width="5.55" height="5.3"></rect><rect x="158.80" y="297.90" width="5.55" height="5.3"></rect><rect x="126.10" y="306.07" width="5.55" height="5.3"></rect><rect x="132.64" y="306.07" width="5.55" height="5.3"></rect><rect x="139.18" y="306.07" width="5.55" height="5.3"></rect><rect x="145.72" y="306.07" width="5.55" height="5.3"></rect><rect x="152.26" y="306.07" width="5.55" height="5.3"></rect><rect x="158.80" y="306.07" width="5.55" height="5.3"></rect><rect x="9.10" y="343.85" width="5.55" height="5.3"></rect><rect x="15.64" y="343.85" width="5.55" height="5.3"></rect><rect x="22.18" y="343.85" width="5.55" height="5.3"></rect><rect x="28.72" y="343.85" width="5.55" height="5.3"></rect><rect x="35.26" y="343.85" width="5.55" height="5.3"></rect><rect x="41.80" y="343.85" width="5.55" height="5.3"></rect><rect x="9.10" y="353.10" width="5.55" height="5.3"></rect><rect x="15.64" y="353.10" width="5.55" height="5.3"></rect><rect x="22.18" y="353.10" width="5.55" height="5.3"></rect><rect x="28.72" y="353.10" width="5.55" height="5.3"></rect><rect x="35.26" y="353.10" width="5.55" height="5.3"></rect><rect x="41.80" y="353.10" width="5.55" height="5.3"></rect><rect x="9.10" y="361.35" width="5.55" height="5.3"></rect><rect x="15.64" y="361.35" width="5.55" height="5.3"></rect><rect x="22.18" y="361.35" width="5.55" height="5.3"></rect><rect x="28.72" y="361.35" width="5.55" height="5.3"></rect><rect x="35.26" y="361.35" width="5.55" height="5.3"></rect><rect x="41.80" y="361.35" width="5.55" height="5.3"></rect><rect x="9.10" y="369.55" width="5.55" height="5.3"></rect><rect x="15.64" y="369.55" width="5.55" height="5.3"></rect><rect x="22.18" y="369.55" width="5.55" height="5.3"></rect><rect x="28.72" y="369.55" width="5.55" height="5.3"></rect><rect x="35.26" y="369.55" width="5.55" height="5.3"></rect><rect x="41.80" y="369.55" width="5.55" height="5.3"></rect><rect x="9.10" y="377.65" width="5.55" height="5.3"></rect><rect x="15.64" y="377.65" width="5.55" height="5.3"></rect><rect x="22.18" y="377.65" width="5.55" height="5.3"></rect><rect x="28.72" y="377.65" width="5.55" height="5.3"></rect><rect x="35.26" y="377.65" width="5.55" height="5.3"></rect><rect x="41.80" y="377.65" width="5.55" height="5.3"></rect><rect x="9.10" y="385.95" width="5.55" height="5.3"></rect><rect x="15.64" y="385.95" width="5.55" height="5.3"></rect><rect x="22.18" y="385.95" width="5.55" height="5.3"></rect><rect x="28.72" y="385.95" width="5.55" height="5.3"></rect><rect x="35.26" y="385.95" width="5.55" height="5.3"></rect><rect x="41.80" y="385.95" width="5.55" height="5.3"></rect><rect x="9.10" y="393.85" width="5.55" height="5.3"></rect><rect x="15.64" y="393.85" width="5.55" height="5.3"></rect><rect x="22.18" y="393.85" width="5.55" height="5.3"></rect><rect x="28.72" y="393.85" width="5.55" height="5.3"></rect><rect x="35.26" y="393.85" width="5.55" height="5.3"></rect><rect x="41.80" y="393.85" width="5.55" height="5.3"></rect><rect x="126.10" y="343.85" width="5.55" height="5.3"></rect><rect x="132.64" y="343.85" width="5.55" height="5.3"></rect><rect x="139.18" y="343.85" width="5.55" height="5.3"></rect><rect x="145.72" y="343.85" width="5.55" height="5.3"></rect><rect x="152.26" y="343.85" width="5.55" height="5.3"></rect><rect x="158.80" y="343.85" width="5.55" height="5.3"></rect><rect x="126.10" y="353.10" width="5.55" height="5.3"></rect><rect x="132.64" y="353.10" width="5.55" height="5.3"></rect><rect x="139.18" y="353.10" width="5.55" height="5.3"></rect><rect x="145.72" y="353.10" width="5.55" height="5.3"></rect><rect x="152.26" y="353.10" width="5.55" height="5.3"></rect><rect x="158.80" y="353.10" width="5.55" height="5.3"></rect><rect x="126.10" y="361.35" width="5.55" height="5.3"></rect><rect x="132.64" y="361.35" width="5.55" height="5.3"></rect><rect x="139.18" y="361.35" width="5.55" height="5.3"></rect><rect x="145.72" y="361.35" width="5.55" height="5.3"></rect><rect x="152.26" y="361.35" width="5.55" height="5.3"></rect><rect x="158.80" y="361.35" width="5.55" height="5.3"></rect><rect x="126.10" y="369.55" width="5.55" height="5.3"></rect><rect x="132.64" y="369.55" width="5.55" height="5.3"></rect><rect x="139.18" y="369.55" width="5.55" height="5.3"></rect><rect x="145.72" y="369.55" width="5.55" height="5.3"></rect><rect x="152.26" y="369.55" width="5.55" height="5.3"></rect><rect x="158.80" y="369.55" width="5.55" height="5.3"></rect><rect x="126.10" y="377.65" width="5.55" height="5.3"></rect><rect x="132.64" y="377.65" width="5.55" height="5.3"></rect><rect x="139.18" y="377.65" width="5.55" height="5.3"></rect><rect x="145.72" y="377.65" width="5.55" height="5.3"></rect><rect x="152.26" y="377.65" width="5.55" height="5.3"></rect><rect x="158.80" y="377.65" width="5.55" height="5.3"></rect><rect x="126.10" y="385.95" width="5.55" height="5.3"></rect><rect x="132.64" y="385.95" width="5.55" height="5.3"></rect><rect x="139.18" y="385.95" width="5.55" height="5.3"></rect><rect x="145.72" y="385.95" width="5.55" height="5.3"></rect><rect x="152.26" y="385.95" width="5.55" height="5.3"></rect><rect x="158.80" y="385.95" width="5.55" height="5.3"></rect><rect x="126.10" y="393.85" width="5.55" height="5.3"></rect><rect x="132.64" y="393.85" width="5.55" height="5.3"></rect><rect x="139.18" y="393.85" width="5.55" height="5.3"></rect><rect x="145.72" y="393.85" width="5.55" height="5.3"></rect><rect x="152.26" y="393.85" width="5.55" height="5.3"></rect><rect x="158.80" y="393.85" width="5.55" height="5.3"></rect><rect x="243.15" y="83.85" width="5.55" height="5.3"></rect><rect x="249.69" y="83.85" width="5.55" height="5.3"></rect><rect x="256.23" y="83.85" width="5.55" height="5.3"></rect><rect x="262.77" y="83.85" width="5.55" height="5.3"></rect><rect x="269.31" y="83.85" width="5.55" height="5.3"></rect><rect x="275.85" y="83.85" width="5.55" height="5.3"></rect><rect x="243.15" y="92.02" width="5.55" height="5.3"></rect><rect x="249.69" y="92.02" width="5.55" height="5.3"></rect><rect x="256.23" y="92.02" width="5.55" height="5.3"></rect><rect x="262.77" y="92.02" width="5.55" height="5.3"></rect><rect x="269.31" y="92.02" width="5.55" height="5.3"></rect><rect x="275.85" y="92.02" width="5.55" height="5.3"></rect><rect x="243.15" y="100.19" width="5.55" height="5.3"></rect><rect x="249.69" y="100.19" width="5.55" height="5.3"></rect><rect x="256.23" y="100.19" width="5.55" height="5.3"></rect><rect x="262.77" y="100.19" width="5.55" height="5.3"></rect><rect x="269.31" y="100.19" width="5.55" height="5.3"></rect><rect x="275.85" y="100.19" width="5.55" height="5.3"></rect><rect x="243.15" y="108.36" width="5.55" height="5.3"></rect><rect x="249.69" y="108.36" width="5.55" height="5.3"></rect><rect x="256.23" y="108.36" width="5.55" height="5.3"></rect><rect x="262.77" y="108.36" width="5.55" height="5.3"></rect><rect x="269.31" y="108.36" width="5.55" height="5.3"></rect><rect x="275.85" y="108.36" width="5.55" height="5.3"></rect><rect x="243.15" y="116.53" width="5.55" height="5.3"></rect><rect x="249.69" y="116.53" width="5.55" height="5.3"></rect><rect x="256.23" y="116.53" width="5.55" height="5.3"></rect><rect x="262.77" y="116.53" width="5.55" height="5.3"></rect><rect x="269.31" y="116.53" width="5.55" height="5.3"></rect><rect x="275.85" y="116.53" width="5.55" height="5.3"></rect></svg>
<div class="t h" style="left: 0px; top: 0px; font-size: 15.75px; line-height: 17px; color: rgb(234, 85, 60); transform-origin: 0px 14px; transform: translate(15.69px, 66.63px) scale(1, 1.09) rotate(0.05deg);">AUD</div>
<div class="t l" style="left: 0px; top: 0px; font-size: 5.95px; line-height: 6px; color: rgb(222, 222, 222); transform-origin: 0px 5px; transform: translate(49.39px, 83.63px) scale(1, 1.08) rotate(0.05deg);">AUDCAD</div>
<div class="t l" style="left: 0px; top: 0px; font-size: 5.95px; line-height: 6px; color: rgb(222, 222, 222); transform-origin: 0px 5px; transform: translate(49px, 92.13px) scale(1, 1.08) rotate(0.05deg);">AUDCHF</div>
<div class="t l" style="left: 0px; top: 0px; font-size: 5.95px; line-height: 6px; color: rgb(222, 222, 222); transform-origin: 0px 5px; transform: translate(50.5px, 101.42px) scale(1, 1.08) rotate(0.05deg);">AUDJPY</div>
<div class="t l" style="left: 0px; top: 0px; font-size: 5.95px; line-height: 6px; color: rgb(222, 222, 222); transform-origin: 0px 5px; transform: translate(47.5px, 108.42px) scale(1, 1.08) rotate(0.05deg);">AUDNZD</div>
<div class="t l" style="left: 0px; top: 0px; font-size: 5.95px; line-height: 6px; color: rgb(222, 222, 222); transform-origin: 0px 5px; transform: translate(46.8px, 116.42px) scale(1, 1.08) rotate(0.05deg);">AUDUSD</div>
<div class="t l" style="left: 0px; top: 0px; font-size: 5.95px; line-height: 6px; color: rgb(222, 222, 222); transform-origin: 0px 5px; transform: translate(48px, 123.83px) scale(1, 1.08) rotate(0.05deg);">EURAUD</div>
<div class="t l" style="left: 0px; top: 0px; font-size: 5.95px; line-height: 6px; color: rgb(222, 222, 222); transform-origin: 0px 5px; transform: translate(49px, 133.13px) scale(1, 1.08) rotate(0.05deg);">GBPAUD</div>
<div class="t h" style="left: 0px; top: 0px; font-size: 15.75px; line-height: 17px; color: rgb(12, 201, 207); transform-origin: 0px 14px; transform: translate(132.39px, 67.03px) scale(1, 1.09) rotate(0.05deg);">GBP</div>
<div class="t l" style="left: 0px; top: 0px; font-size: 5.95px; line-height: 6px; color: rgb(222, 222, 222); transform-origin: 0px 5px; transform: translate(167px, 83.13px) scale(1, 1.08) rotate(0.05deg);">GBPAUD</div>
<div class="t l" style="left: 0px; top: 0px; font-size: 5.95px; line-height: 6px; color: rgb(222, 222, 222); transform-origin: 0px 5px; transform: translate(167px, 91.72px) scale(1, 1.08) rotate(0.05deg);">GBPCAD</div>
<div class="t l" style="left: 0px; top: 0px; font-size: 5.95px; line-height: 6px; color: rgb(222, 222, 222); transform-origin: 0px 5px; transform: translate(167px, 99.63px) scale(1, 1.08) rotate(0.05deg);">GBPCHF</div>
<div class="t l" style="left: 0px; top: 0px; font-size: 5.95px; line-height: 6px; color: rgb(222, 222, 222); transform-origin: 0px 5px; transform: translate(167.5px, 108.63px) scale(1, 1.08) rotate(0.05deg);">GBPJPY</div>
<div class="t l" style="left: 0px; top: 0px; font-size: 5.95px; line-height: 6px; color: rgb(222, 222, 222); transform-origin: 0px 5px; transform: translate(165.5px, 116.13px) scale(1, 1.08) rotate(0.05deg);">GBPNZD</div>
<div class="t l" style="left: 0px; top: 0px; font-size: 5.95px; line-height: 6px; color: rgb(222, 222, 222); transform-origin: 0px 5px; transform: translate(167px, 124.63px) scale(1, 1.08) rotate(0.05deg);">GBPUSD</div>
<div class="t l" style="left: 0px; top: 0px; font-size: 5.95px; line-height: 6px; color: rgb(222, 222, 222); transform-origin: 0px 5px; transform: translate(166.5px, 131.92px) scale(1, 1.08) rotate(0.05deg);">EURGBP</div>
<div class="t h" style="left: 0px; top: 0px; font-size: 15.75px; line-height: 17px; color: rgb(188, 188, 188); transform-origin: 0px 14px; transform: translate(13.59px, 153.33px) scale(1, 1.09) rotate(0.05deg);">CAD</div>
<div class="t l" style="left: 0px; top: 0px; font-size: 5.95px; line-height: 6px; color: rgb(222, 222, 222); transform-origin: 0px 5px; transform: translate(49.5px, 169.92px) scale(1, 1.08) rotate(0.05deg);">CADCHF</div>
<div class="t l" style="left: 0px; top: 0px; font-size: 5.95px; line-height: 6px; color: rgb(222, 222, 222); transform-origin: 0px 5px; transform: translate(49.5px, 178.13px) scale(1, 1.08) rotate(0.05deg);">CADJPY</div>
<div class="t l" style="left: 0px; top: 0px; font-size: 5.95px; line-height: 6px; color: rgb(222, 222, 222); transform-origin: 0px 5px; transform: translate(48.8px, 186.13px) scale(1, 1.08) rotate(0.05deg);">AUDCAD</div>
<div class="t l" style="left: 0px; top: 0px; font-size: 5.95px; line-height: 6px; color: rgb(222, 222, 222); transform-origin: 0px 5px; transform: translate(49.5px, 195.13px) scale(1, 1.08) rotate(0.05deg);">EURCAD</div>
<div class="t l" style="left: 0px; top: 0px; font-size: 5.95px; line-height: 6px; color: rgb(222, 222, 222); transform-origin: 0px 5px; transform: translate(49px, 203.63px) scale(1, 1.08) rotate(0.05deg);">GBPCAD</div>
<div class="t l" style="left: 0px; top: 0px; font-size: 5.95px; line-height: 6px; color: rgb(222, 222, 222); transform-origin: 0px 5px; transform: translate(48.8px, 212.13px) scale(1, 1.08) rotate(0.05deg);">NZDCAD</div>
<div class="t l" style="left: 0px; top: 0px; font-size: 5.95px; line-height: 6px; color: rgb(222, 222, 222); transform-origin: 0px 5px; transform: translate(48.8px, 219.42px) scale(1, 1.08) rotate(0.05deg);">USDCAD</div>
<div class="t h" style="left: 0px; top: 0px; font-size: 15.75px; line-height: 17px; color: rgb(235, 165, 33); transform-origin: 0px 14px; transform: translate(132.89px, 152.73px) scale(1, 1.09) rotate(0.05deg);">JPY</div>
<div class="t l" style="left: 0px; top: 0px; font-size: 5.95px; line-height: 6px; color: rgb(222, 222, 222); transform-origin: 0px 5px; transform: translate(167.59px, 171.42px) scale(1, 1.08) rotate(0.05deg);">AUDJPY</div>
<div class="t l" style="left: 0px; top: 0px; font-size: 5.95px; line-height: 6px; color: rgb(222, 222, 222); transform-origin: 0px 5px; transform: translate(167.59px, 178.63px) scale(1, 1.08) rotate(0.05deg);">CADJPY</div>
<div class="t l" style="left: 0px; top: 0px; font-size: 5.95px; line-height: 6px; color: rgb(222, 222, 222); transform-origin: 0px 5px; transform: translate(167px, 186.63px) scale(1, 1.08) rotate(0.05deg);">CHFJPY</div>
<div class="t l" style="left: 0px; top: 0px; font-size: 5.95px; line-height: 6px; color: rgb(222, 222, 222); transform-origin: 0px 5px; transform: translate(166.8px, 194.63px) scale(1, 1.08) rotate(0.05deg);">EURJPY</div>
<div class="t l" style="left: 0px; top: 0px; font-size: 5.95px; line-height: 6px; color: rgb(222, 222, 222); transform-origin: 0px 5px; transform: translate(166px, 204.13px) scale(1, 1.08) rotate(0.05deg);">GBPJPY</div>
<div class="t l" style="left: 0px; top: 0px; font-size: 5.95px; line-height: 6px; color: rgb(222, 222, 222); transform-origin: 0px 5px; transform: translate(165.3px, 212.63px) scale(1, 1.08) rotate(0.05deg);">NZDJPY</div>
<div class="t l" style="left: 0px; top: 0px; font-size: 5.95px; line-height: 6px; color: rgb(222, 222, 222); transform-origin: 0px 5px; transform: translate(166.19px, 219.83px) scale(1, 1.08) rotate(0.05deg);">USDJPY</div>
<div class="t h" style="left: 0px; top: 0px; font-size: 15.75px; line-height: 17px; color: rgb(147, 210, 50); transform-origin: 0px 14px; transform: translate(16px, 239.58px) scale(1, 1.09) rotate(0.05deg);">CHF</div>
<div class="t l" style="left: 0px; top: 0px; font-size: 5.95px; line-height: 6px; color: rgb(222, 222, 222); transform-origin: 0px 5px; transform: translate(49.5px, 257.52px) scale(1, 1.08) rotate(0.05deg);">CHFJPY</div>
<div class="t l" style="left: 0px; top: 0px; font-size: 5.95px; line-height: 6px; color: rgb(222, 222, 222); transform-origin: 0px 5px; transform: translate(49.5px, 264.83px) scale(1, 1.08) rotate(0.05deg);">AUDCHF</div>
<div class="t l" style="left: 0px; top: 0px; font-size: 5.95px; line-height: 6px; color: rgb(222, 222, 222); transform-origin: 0px 5px; transform: translate(48px, 274.13px) scale(1, 1.08) rotate(0.05deg);">CADCHF</div>
<div class="t l" style="left: 0px; top: 0px; font-size: 5.95px; line-height: 6px; color: rgb(222, 222, 222); transform-origin: 0px 5px; transform: translate(49px, 282.63px) scale(1, 1.08) rotate(0.05deg);">EURCHF</div>
<div class="t l" style="left: 0px; top: 0px; font-size: 5.95px; line-height: 6px; color: rgb(222, 222, 222); transform-origin: 0px 5px; transform: translate(49px, 290.52px) scale(1, 1.08) rotate(0.05deg);">GBPCHF</div>
<div class="t l" style="left: 0px; top: 0px; font-size: 5.95px; line-height: 6px; color: rgb(222, 222, 222); transform-origin: 0px 5px; transform: translate(49px, 298.72px) scale(1, 1.08) rotate(0.05deg);">NZDCHF</div>
<div class="t l" style="left: 0px; top: 0px; font-size: 5.95px; line-height: 6px; color: rgb(222, 222, 222); transform-origin: 0px 5px; transform: translate(49px, 306.63px) scale(1, 1.08) rotate(0.05deg);">USDCHF</div>
<div class="t h" style="left: 0px; top: 0px; font-size: 15.75px; line-height: 17px; color: rgb(152, 220, 239); transform-origin: 0px 14px; transform: translate(129.89px, 239.58px) scale(1, 1.09) rotate(0.05deg);">NZD</div>
<div class="t l" style="left: 0px; top: 0px; font-size: 5.95px; line-height: 6px; color: rgb(222, 222, 222); transform-origin: 0px 5px; transform: translate(167px, 256.52px) scale(1, 1.08) rotate(0.05deg);">NZDCAD</div>
<div class="t l" style="left: 0px; top: 0px; font-size: 5.95px; line-height: 6px; color: rgb(222, 222, 222); transform-origin: 0px 5px; transform: translate(167px, 265.13px) scale(1, 1.08) rotate(0.05deg);">NZDCHF</div>
<div class="t l" style="left: 0px; top: 0px; font-size: 5.95px; line-height: 6px; color: rgb(222, 222, 222); transform-origin: 0px 5px; transform: translate(167px, 274.63px) scale(1, 1.08) rotate(0.05deg);">NZDJPY</div>
<div class="t l" style="left: 0px; top: 0px; font-size: 5.95px; line-height: 6px; color: rgb(222, 222, 222); transform-origin: 0px 5px; transform: translate(167px, 281.83px) scale(1, 1.08) rotate(0.05deg);">NZDUSD</div>
<div class="t l" style="left: 0px; top: 0px; font-size: 5.95px; line-height: 6px; color: rgb(222, 222, 222); transform-origin: 0px 5px; transform: translate(167px, 290.42px) scale(1, 1.08) rotate(0.05deg);">AUDNZD</div>
<div class="t l" style="left: 0px; top: 0px; font-size: 5.95px; line-height: 6px; color: rgb(222, 222, 222); transform-origin: 0px 5px; transform: translate(167px, 298.72px) scale(1, 1.08) rotate(0.05deg);">EURNZD</div>
<div class="t l" style="left: 0px; top: 0px; font-size: 5.95px; line-height: 6px; color: rgb(222, 222, 222); transform-origin: 0px 5px; transform: translate(167.5px, 306.83px) scale(1, 1.08) rotate(0.05deg);">GBPNZD</div>
<div class="t h" style="left: 0px; top: 0px; font-size: 15.75px; line-height: 17px; color: rgb(245, 212, 0); transform-origin: 0px 14px; transform: translate(16.89px, 327.38px) scale(1, 1.09) rotate(0.05deg);">EUR</div>
<div class="t l" style="left: 0px; top: 0px; font-size: 5.95px; line-height: 6px; color: rgb(222, 222, 222); transform-origin: 0px 5px; transform: translate(50.09px, 343.92px) scale(1, 1.08) rotate(0.05deg);">EURAUD</div>
<div class="t l" style="left: 0px; top: 0px; font-size: 5.95px; line-height: 6px; color: rgb(222, 222, 222); transform-origin: 0px 5px; transform: translate(50px, 353.13px) scale(1, 1.08) rotate(0.05deg);">EURCAD</div>
<div class="t l" style="left: 0px; top: 0px; font-size: 5.95px; line-height: 6px; color: rgb(222, 222, 222); transform-origin: 0px 5px; transform: translate(49.5px, 360.72px) scale(1, 1.08) rotate(0.05deg);">EURCHF</div>
<div class="t l" style="left: 0px; top: 0px; font-size: 5.95px; line-height: 6px; color: rgb(222, 222, 222); transform-origin: 0px 5px; transform: translate(50px, 369.33px) scale(1, 1.08) rotate(0.05deg);">EURGBP</div>
<div class="t l" style="left: 0px; top: 0px; font-size: 5.95px; line-height: 6px; color: rgb(222, 222, 222); transform-origin: 0px 5px; transform: translate(49px, 378.13px) scale(1, 1.08) rotate(0.05deg);">EURJPY</div>
<div class="t l" style="left: 0px; top: 0px; font-size: 5.95px; line-height: 6px; color: rgb(222, 222, 222); transform-origin: 0px 5px; transform: translate(48.3px, 386.63px) scale(1, 1.08) rotate(0.05deg);">EURNZD</div>
<div class="t l" style="left: 0px; top: 0px; font-size: 5.95px; line-height: 6px; color: rgb(222, 222, 222); transform-origin: 0px 5px; transform: translate(49px, 394.13px) scale(1, 1.08) rotate(0.05deg);">EURUSD</div>
<div class="t f" style="left: 0px; top: 0px; font-size: 6.6px; line-height: 7px; color: rgb(255, 255, 255); transform-origin: 0px 6px; transform: translate(36.59px, 401.39px) scale(1, 1.05) rotate(0.05deg);">5</div>
<div class="t h" style="left: 0px; top: 0px; font-size: 15.75px; line-height: 17px; color: rgb(255, 255, 255); transform-origin: 0px 14px; transform: translate(127.3px, 325.48px) scale(1, 1.09) rotate(0.05deg);">USD</div>
<div class="t l" style="left: 0px; top: 0px; font-size: 5.95px; line-height: 6px; color: rgb(222, 222, 222); transform-origin: 0px 5px; transform: translate(168px, 342.33px) scale(1, 1.08) rotate(0.05deg);">USDCAD</div>
<div class="t l" style="left: 0px; top: 0px; font-size: 5.95px; line-height: 6px; color: rgb(222, 222, 222); transform-origin: 0px 5px; transform: translate(167.5px, 352.52px) scale(1, 1.08) rotate(0.05deg);">USDCHF</div>
<div class="t l" style="left: 0px; top: 0px; font-size: 5.95px; line-height: 6px; color: rgb(222, 222, 222); transform-origin: 0px 5px; transform: translate(167.69px, 361.13px) scale(1, 1.08) rotate(0.05deg);">USDJPY</div>
<div class="t l" style="left: 0px; top: 0px; font-size: 5.95px; line-height: 6px; color: rgb(222, 222, 222); transform-origin: 0px 5px; transform: translate(167.39px, 369.52px) scale(1, 1.08) rotate(0.05deg);">AUDUSD</div>
<div class="t l" style="left: 0px; top: 0px; font-size: 5.95px; line-height: 6px; color: rgb(222, 222, 222); transform-origin: 0px 5px; transform: translate(167.39px, 378.13px) scale(1, 1.08) rotate(0.05deg);">EURUSD</div>
<div class="t l" style="left: 0px; top: 0px; font-size: 5.95px; line-height: 6px; color: rgb(222, 222, 222); transform-origin: 0px 5px; transform: translate(166.5px, 386.13px) scale(1, 1.08) rotate(0.05deg);">GBPUSD</div>
<div class="t l" style="left: 0px; top: 0px; font-size: 5.95px; line-height: 6px; color: rgb(222, 222, 222); transform-origin: 0px 5px; transform: translate(166.3px, 393.63px) scale(1, 1.08) rotate(0.05deg);">NZDUSD</div>
<div class="t f" style="left: 0px; top: 0px; font-size: 6.6px; line-height: 7px; color: rgb(255, 255, 255); transform-origin: 0px 6px; transform: translate(153.69px, 401.39px) scale(1, 1.05) rotate(0.05deg);">5</div>
<div class="t h" style="left: 0px; top: 0px; font-size: 7.6px; line-height: 9px; color: rgb(227, 146, 0); transform-origin: 0px 7px; transform: translate(237.5px, 73.27px) scale(1, 1.09) rotate(0.05deg);">Crypto+Metals</div>
<div class="t l" style="left: 0px; top: 0px; font-size: 5.95px; line-height: 6px; color: rgb(222, 222, 222); transform-origin: 0px 5px; transform: translate(282.5px, 83.38px) scale(1, 1.08) rotate(0.05deg);">BTCUSD</div>
<div class="t l" style="left: 0px; top: 0px; font-size: 5.95px; line-height: 6px; color: rgb(222, 222, 222); transform-origin: 0px 5px; transform: translate(281.8px, 91.63px) scale(1, 1.08) rotate(0.05deg);">ETHUSD</div>
<div class="t l" style="left: 0px; top: 0px; font-size: 5.95px; line-height: 6px; color: rgb(222, 222, 222); transform-origin: 0px 5px; transform: translate(281.8px, 99.72px) scale(1, 1.08) rotate(0.05deg);">LTCUSD</div>
<div class="t l" style="left: 0px; top: 0px; font-size: 5.95px; line-height: 6px; color: rgb(222, 222, 222); transform-origin: 0px 5px; transform: translate(282.5px, 108.13px) scale(1, 1.08) rotate(0.05deg);">XAGUSD</div>
<div class="t l" style="left: 0px; top: 0px; font-size: 5.95px; line-height: 6px; color: rgb(222, 222, 222); transform-origin: 0px 5px; transform: translate(282px, 116.72px) scale(1, 1.08) rotate(0.05deg);">XAUUSD</div>
<div class="t f" style="left: 0px; top: 0px; font-size: 6.6px; line-height: 7px; color: rgb(255, 255, 255); transform-origin: 0px 6px; transform: translate(269.69px, 123.5px) scale(1, 1.05) rotate(0.05deg);">5</div>
</div>
<div class="abs" style="left:0;top:423.3px;width:800px;height:12.4px;background:#f0f0f0;"></div>
<div class="abs" style="left:0;top:423.3px;width:800px;height:1.1px;background:#9a9a9a;"></div>
<div class="abs" style="left:0;top:435.4px;width:800px;height:0.8px;background:#d6d6d6;"></div>
<div class="abs" style="left:0;top:436.2px;width:800px;height:13.8px;background:#f0f0f0;"></div>
<div class="abs" style="left:0.6px;top:424px;width:1px;height:11.4px;background:#6e6e6e;"></div>
<div class="t" id="tab1" style="left: 0px; top: 0px; font-size: 6.2px; line-height: 7px; color: rgb(138, 138, 138); transform-origin: 0px 6px; transform: translate(10.2px, 426.89px) scale(1.0103, 1.1) rotate(0.05deg);">GBPUSD,M30</div>
<div class="abs" style="left:57.2px;top:423.3px;width:49.6px;height:12.6px;background:#fff;border:0.9px solid #222;border-top:none;box-sizing:border-box;"></div>
<div class="t" id="tab2" style="left: 0px; top: 0px; font-size: 6.2px; line-height: 7px; color: rgb(26, 26, 26); transform-origin: 0px 6px; transform: translate(63.8px, 426.89px) scale(1.001, 1.1) rotate(0.05deg);">EURUSD,H4</div>
<div class="abs" style="left:780.8px;top:427.9px;width:0;height:0;border-top:2.1px solid transparent;border-bottom:2.1px solid transparent;border-right:2.6px solid #7c7c7c;"></div>
<div class="abs" style="left:791.6px;top:427.9px;width:0;height:0;border-top:2.1px solid transparent;border-bottom:2.1px solid transparent;border-left:2.6px solid #7c7c7c;"></div>
<div class="sb" id="sb0" style="left: 0px; top: 0px; transform-origin: 0px 6px; transform: translate(1.7px, 439.59px) scale(1.0071, 1.1) rotate(0.05deg);">For Help, press F1</div>
<div class="sb" id="sb1" style="left: 0px; top: 0px; transform-origin: 0px 6px; transform: translate(386px, 439.59px) scale(1.0864, 1.1) rotate(0.05deg);">Default</div>
<div class="sb" id="sb2" style="left: 0px; top: 0px; transform-origin: 0px 6px; transform: translate(453.9px, 439.59px) scale(0.9826, 1.1) rotate(0.05deg);">2022.04.25 16:00</div>
<div class="sb" id="sb3" style="left: 0px; top: 0px; transform-origin: 0px 6px; transform: translate(513.8px, 439.59px) scale(1.0024, 1.1) rotate(0.05deg);">O: 1.07430</div>
<div class="sb" id="sb4" style="left: 0px; top: 0px; transform-origin: 0px 6px; transform: translate(554.8px, 439.59px) scale(0.9942, 1.1) rotate(0.05deg);">H: 1.07436</div>
<div class="sb" id="sb5" style="left: 0px; top: 0px; transform-origin: 0px 6px; transform: translate(597px, 439.59px) scale(0.9845, 1.1) rotate(0.05deg);">L: 1.06968</div>
<div class="sb" id="sb6" style="left: 0px; top: 0px; transform-origin: 0px 6px; transform: translate(637px, 439.59px) scale(0.975, 1.1) rotate(0.05deg);">C: 1.07153</div>
<div class="sb" id="sb7" style="left: 0px; top: 0px; transform-origin: 0px 6px; transform: translate(677.6px, 439.59px) scale(0.9915, 1.1) rotate(0.05deg);">V: 22111</div>
<div class="sb" id="sb8" style="left: 0px; top: 0px; transform-origin: 0px 6px; transform: translate(732px, 439.59px) scale(1.0345, 1.1) rotate(0.05deg);">24049/63 kb</div>
<div class="sbsep" style="left:382.4px"></div>
<div class="sbsep" style="left:450.3px"></div>
<div class="sbsep" style="left:511px"></div>
<div class="sbsep" style="left:551.5px"></div>
<div class="sbsep" style="left:593.75px"></div>
<div class="sbsep" style="left:633.6px"></div>
<div class="sbsep" style="left:674.3px"></div>
<div class="sbsep" style="left:712.6px"></div>
<svg style="left:716px;top:439.2px" width="15" height="9" viewBox="0 0 15 9"><rect x="0.00" y="0" width="1.1" height="8.3" fill="#5f9e3a"></rect><rect x="0.00" y="6.80" width="1.1" height="1.50" fill="#2e6fb8"></rect><rect x="1.60" y="0" width="1.1" height="8.3" fill="#5f9e3a"></rect><rect x="1.60" y="6.00" width="1.1" height="2.30" fill="#2e6fb8"></rect><rect x="3.20" y="0" width="1.1" height="8.3" fill="#5f9e3a"></rect><rect x="3.20" y="5.20" width="1.1" height="3.10" fill="#2e6fb8"></rect><rect x="4.80" y="0" width="1.1" height="8.3" fill="#5f9e3a"></rect><rect x="4.80" y="4.40" width="1.1" height="3.90" fill="#2e6fb8"></rect><rect x="6.40" y="0" width="1.1" height="8.3" fill="#5f9e3a"></rect><rect x="6.40" y="3.60" width="1.1" height="4.70" fill="#2e6fb8"></rect><rect x="8.00" y="0" width="1.1" height="8.3" fill="#5f9e3a"></rect><rect x="8.00" y="2.80" width="1.1" height="5.50" fill="#2e6fb8"></rect><rect x="9.60" y="0" width="1.1" height="8.3" fill="#5f9e3a"></rect><rect x="9.60" y="2.00" width="1.1" height="6.30" fill="#2e6fb8"></rect><rect x="11.20" y="0" width="1.1" height="8.3" fill="#5f9e3a"></rect><rect x="11.20" y="1.20" width="1.1" height="7.10" fill="#2e6fb8"></rect><rect x="12.80" y="0" width="1.1" height="8.3" fill="#5f9e3a"></rect><rect x="12.80" y="0.40" width="1.1" height="7.90" fill="#2e6fb8"></rect></svg>


</body></html>
